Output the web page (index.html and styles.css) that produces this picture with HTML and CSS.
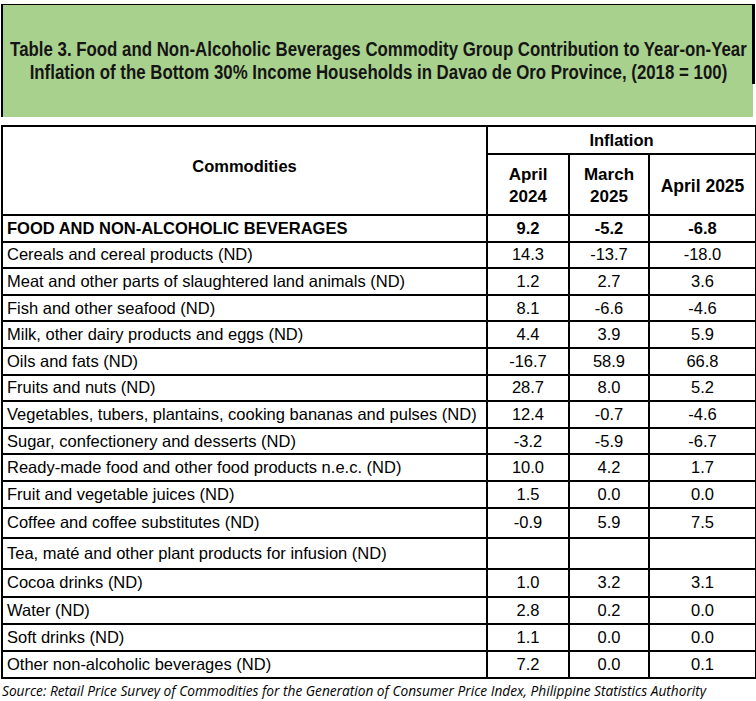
FILE: index.html
```html
<!DOCTYPE html>
<html>
<head>
<meta charset="utf-8">
<link rel="stylesheet" href="styles.css">
</head>
<body>
<div class="page">
  <div class="title-box">
    <div class="title-edge"></div>
    <h1 class="title">Table 3. Food and Non-Alcoholic Beverages Commodity Group Contribution to Year-on-Year<br>Inflation of the Bottom 30% Income Households in Davao de Oro Province, (2018 = 100)</h1>
  </div>
  <table class="data">
    <colgroup>
      <col class="c-name"><col class="c-a"><col class="c-b"><col class="c-c">
    </colgroup>
    <thead>
      <tr class="h1">
        <th rowspan="2" class="commod">Commodities</th>
        <th colspan="3">Inflation</th>
      </tr>
      <tr class="h2">
        <th>April<br>2024</th>
        <th>March<br>2025</th>
        <th>April 2025</th>
      </tr>
    </thead>
    <tbody>
      <tr class="total"><td>FOOD AND NON-ALCOHOLIC BEVERAGES</td><td>9.2</td><td>-5.2</td><td>-6.8</td></tr>
      <tr><td>Cereals and cereal products (ND)</td><td>14.3</td><td>-13.7</td><td>-18.0</td></tr>
      <tr><td>Meat and other parts of slaughtered land animals (ND)</td><td>1.2</td><td>2.7</td><td>3.6</td></tr>
      <tr><td>Fish and other seafood (ND)</td><td>8.1</td><td>-6.6</td><td>-4.6</td></tr>
      <tr><td>Milk, other dairy products and eggs (ND)</td><td>4.4</td><td>3.9</td><td>5.9</td></tr>
      <tr><td>Oils and fats (ND)</td><td>-16.7</td><td>58.9</td><td>66.8</td></tr>
      <tr><td>Fruits and nuts (ND)</td><td>28.7</td><td>8.0</td><td>5.2</td></tr>
      <tr><td>Vegetables, tubers, plantains, cooking bananas and pulses (ND)</td><td>12.4</td><td>-0.7</td><td>-4.6</td></tr>
      <tr><td>Sugar, confectionery and desserts (ND)</td><td>-3.2</td><td>-5.9</td><td>-6.7</td></tr>
      <tr><td>Ready-made food and other food products n.e.c. (ND)</td><td>10.0</td><td>4.2</td><td>1.7</td></tr>
      <tr><td>Fruit and vegetable juices (ND)</td><td>1.5</td><td>0.0</td><td>0.0</td></tr>
      <tr class="r-coffee"><td>Coffee and coffee substitutes (ND)</td><td>-0.9</td><td>5.9</td><td>7.5</td></tr>
      <tr class="r-tea"><td>Tea, maté and other plant products for infusion (ND)</td><td></td><td></td><td></td></tr>
      <tr class="r-cocoa"><td>Cocoa drinks (ND)</td><td>1.0</td><td>3.2</td><td>3.1</td></tr>
      <tr class="r-end"><td>Water (ND)</td><td>2.8</td><td>0.2</td><td>0.0</td></tr>
      <tr class="r-end"><td>Soft drinks (ND)</td><td>1.1</td><td>0.0</td><td>0.0</td></tr>
      <tr class="r-end"><td>Other non-alcoholic beverages (ND)</td><td>7.2</td><td>0.0</td><td>0.1</td></tr>
    </tbody>
  </table>
  <p class="source">Source: Retail Price Survey of Commodities for the Generation of Consumer Price Index, Philippine Statistics Authority</p>
</div>
</body>
</html>
```
FILE: styles.css
```css
html, body {
  margin: 0;
  padding: 0;
  background: #ffffff;
}

.page {
  width: 756px;
  padding-top: 4px;
  font-family: "Liberation Sans", Arial, sans-serif;
  color: #000;
}

.title-box {
  position: relative;
  margin-left: 1px;
  width: 752px;
  height: 113px;
  box-sizing: border-box;
  background: #a9d18e;
  border-top: 1px solid #000;
  border-left: 2px solid #000;
  display: flex;
  align-items: center;
  justify-content: center;
}

.title-edge {
  position: absolute;
  right: -2px;
  top: -1px;
  width: 3px;
  height: 80px;
  background: #000;
}

.title {
  margin: 0;
  flex: none;
  white-space: nowrap;
  font-family: "Liberation Sans", Arial, sans-serif;
  font-weight: bold;
  font-size: 20px;
  line-height: 23px;
  text-align: center;
  color: #151515;
  transform: scaleX(0.842);
}

.data {
  margin-top: 8px;
  margin-left: 1px;
  width: 754px;
  border-collapse: collapse;
  table-layout: fixed;
  font-size: 16.5px;
}

.c-name { width: 485px; }
.c-a { width: 82px; }
.c-b { width: 80px; }
.c-c { width: 107px; }

.data th, .data td {
  border: 2px solid #000;
  padding: 0 4px;
}

.data th {
  font-weight: bold;
  text-align: center;
  line-height: 22px;
}

.h1 th { height: 26px; }
.h2 th { height: 57px; font-size: 17px; padding-top: 2px; }
.h2 th:last-child { font-size: 17.5px; padding-left: 2px; padding-right: 2px; }
.h1 th.commod { font-size: 16.5px; padding-bottom: 9px; }

.commod { vertical-align: middle; }

.data td {
  height: 24.6px;
  line-height: 19px;
  text-align: center;
}

.data td:first-child {
  text-align: left;
}

.total td {
  font-weight: bold;
}

.r-coffee td { height: 28px; }
.r-tea td { height: 29px; }
.r-cocoa td { height: 26px; }
.r-end td { height: 25px; }

.source {
  margin: 4px 0 0 2px;
  font-family: "Open Sans", "Liberation Sans", sans-serif;
  font-style: italic;
  font-size: 13.7px;
  line-height: 16px;
  white-space: nowrap;
}
```
